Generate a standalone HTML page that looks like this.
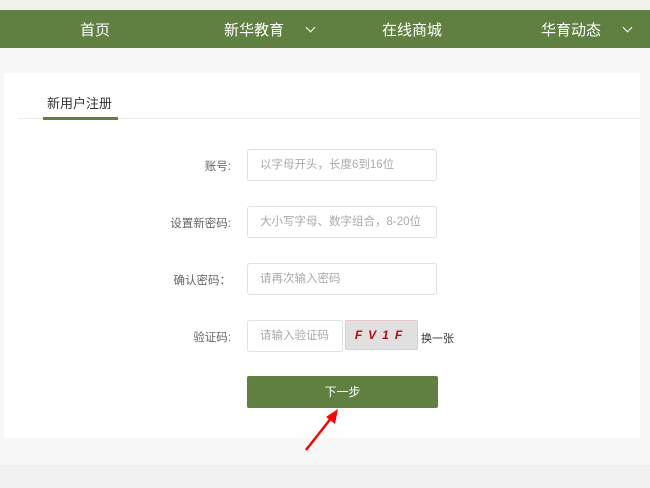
<!DOCTYPE html>
<html><head><meta charset="utf-8"><style>
body{margin:0;width:650px;height:488px;background:#f7f7f7;font-family:"Liberation Sans","Noto Sans CJK SC",sans-serif;position:relative;overflow:hidden}
.top{position:absolute;left:0;top:0;width:650px;height:10px;background:#f3f1ec}
.nav{position:absolute;left:0;top:10px;width:650px;height:38px;background:#5f8040;color:#fff;font-size:15px}
.nav span{position:absolute;top:9px}
.nav i{position:absolute;top:14px;width:6px;height:6px;border-right:1px solid #fff;border-bottom:1px solid #fff;transform:rotate(45deg)}
.card{position:absolute;left:4px;top:73px;width:636px;height:365px;background:#fff}
.bottom{position:absolute;left:0;top:465px;width:650px;height:23px;background:#f0f0f0}
.tab{position:absolute;left:47px;top:93px;font-size:13px;color:#333}
.tline{position:absolute;left:18px;top:118px;width:622px;height:1px;background:#ebebeb}
.tact{position:absolute;left:43px;top:117px;width:75px;height:3px;background:#5f8040}
.lbl{position:absolute;font-size:11.5px;color:#666;text-align:right;width:140px;left:91px}
.inp{position:absolute;left:247px;width:176px;height:30px;border:1px solid #dfdfe6;border-radius:3px;font-size:11.5px;color:#aaa;line-height:30px;padding-left:12px}
.btn{position:absolute;left:247px;top:376px;width:191px;height:32px;background:#5f8040;border-radius:2px;color:#fff;font-size:12px;text-align:center;line-height:32px}
</style></head><body>
<div class="top"></div>
<div class="nav">
<span style="left:80px">首页</span>
<span style="left:224px">新华教育</span><i style="left:307px"></i>
<span style="left:382px">在线商城</span>
<span style="left:541px">华育动态</span><i style="left:624px"></i>
</div>
<div class="card"></div>
<div class="bottom"></div>
<div class="tab">新用户注册</div>
<div class="tline"></div><div class="tact"></div>
<div class="lbl" style="top:158px">账号:</div>
<div class="inp" style="top:149px">以字母开头，长度6到16位</div>
<div class="lbl" style="top:215px">设置新密码:</div>
<div class="inp" style="top:206px">大小写字母、数字组合，8-20位</div>
<div class="lbl" style="top:272px">确认密码：</div>
<div class="inp" style="top:263px">请再次输入密码</div>
<div class="lbl" style="top:329px">验证码:</div>
<div class="inp" style="top:320px;width:82px">请输入验证码</div>
<div style="position:absolute;left:345px;top:320px;width:71px;height:28px;background:#e0e0e0;border:1px solid #e8c8c8;border-radius:2px;color:#b01010;font-weight:bold;font-style:italic;font-size:12px;text-align:center;line-height:28px;letter-spacing:6px">FV1F</div>
<div style="position:absolute;left:421px;top:330px;font-size:11px;color:#333">换一张</div>
<div class="btn">下一步</div>
<svg style="position:absolute;left:300px;top:405px" width="45" height="50"><line x1="6" y1="45" x2="32" y2="12" stroke="#f00" stroke-width="2.5"/><polygon points="38,4 26,12 35,19" fill="#f00"/></svg>
</body></html>
